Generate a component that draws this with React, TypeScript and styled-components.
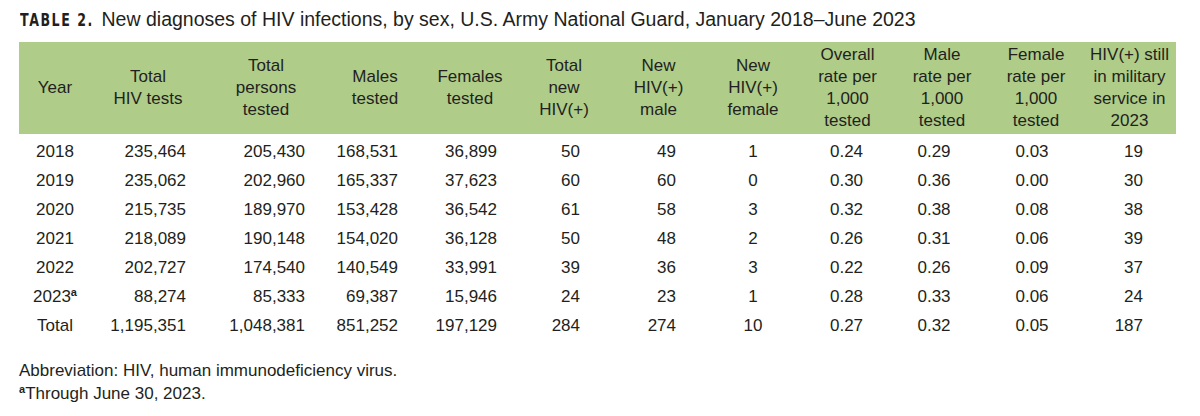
import styled, { createGlobalStyle } from 'styled-components';

const GlobalStyle = createGlobalStyle`
  body {
    margin: 0;
    background: #ffffff;
    font-family: "Liberation Sans", Arial, sans-serif;
    color: #231f20;
  }
`;

const Page = styled.div`
  padding: 7px 24px 0 19px;
  width: 1200px;
  box-sizing: border-box;
`;

const Title = styled.h1`
  margin: 0 0 10px 1px;
  font-size: 19.5px;
  font-weight: 400;
  line-height: 24px;
  white-space: nowrap;
`;

// condensed bold label, squeezed to the narrow face of the print original
const Label = styled.span`
  display: inline-block;
  font-family: "DejaVu Sans", sans-serif;
  font-weight: 700;
  font-size: 18px;
  letter-spacing: 2.2px;
  transform: scaleX(0.7);
  transform-origin: left center;
  margin-right: -24px;
`;

const Table = styled.table`
  width: 1157px;
  border-collapse: collapse;
  table-layout: fixed;
  font-size: 17px;
`;

const HeadRow = styled.tr`
  background: #afcc89;
  height: 92px;
`;

const Th = styled.th`
  font-weight: 400;
  line-height: 22px;
  text-align: center;
  vertical-align: middle;
  padding: 0;
`;

const Row = styled.tr<{ $first?: boolean }>`
  height: ${p => (p.$first ? '32px' : '29px')};

  td {
    padding-top: ${p => (p.$first ? '2px' : '0')};
  }
`;

const Td = styled.td<{ $align: 'center' | 'right'; $pr: number }>`
  text-align: ${p => p.$align};
  padding: 0 ${p => p.$pr}px 0 0;
  line-height: 29px;
  vertical-align: middle;
  white-space: nowrap;
`;

const Sup = styled.sup`
  font-size: 11px;
  font-weight: 700;
  line-height: 0;
  vertical-align: 6px;
`;

const Notes = styled.div`
  margin-top: 20px;
  font-size: 17px;
  line-height: 22.5px;
`;

type Col = { head: string[]; width: number; align: 'center' | 'right'; pr: number };

const COLS: Col[] = [
  { head: ['Year'], width: 72, align: 'center', pr: 0 },
  { head: ['Total', 'HIV tests'], width: 114, align: 'right', pr: 19 },
  { head: ['Total', 'persons', 'tested'], width: 122, align: 'right', pr: 22 },
  { head: ['Males', 'tested'], width: 96, align: 'right', pr: 25 },
  { head: ['Females', 'tested'], width: 94, align: 'right', pr: 20 },
  { head: ['Total', 'new', 'HIV(+)'], width: 94, align: 'right', pr: 31 },
  { head: ['New', 'HIV(+)', 'male'], width: 95, align: 'right', pr: 30 },
  { head: ['New', 'HIV(+)', 'female'], width: 94, align: 'center', pr: 0 },
  { head: ['Overall', 'rate per', '1,000', 'tested'], width: 95, align: 'center', pr: 2 },
  { head: ['Male', 'rate per', '1,000', 'tested'], width: 94, align: 'center', pr: 16 },
  { head: ['Female', 'rate per', '1,000', 'tested'], width: 94, align: 'center', pr: 8 },
  { head: ['HIV(+) still', 'in military', 'service in', '2023'], width: 93, align: 'right', pr: 33 },
];

const ROWS: string[][] = [
  ['2018', '235,464', '205,430', '168,531', '36,899', '50', '49', '1', '0.24', '0.29', '0.03', '19'],
  ['2019', '235,062', '202,960', '165,337', '37,623', '60', '60', '0', '0.30', '0.36', '0.00', '30'],
  ['2020', '215,735', '189,970', '153,428', '36,542', '61', '58', '3', '0.32', '0.38', '0.08', '38'],
  ['2021', '218,089', '190,148', '154,020', '36,128', '50', '48', '2', '0.26', '0.31', '0.06', '39'],
  ['2022', '202,727', '174,540', '140,549', '33,991', '39', '36', '3', '0.22', '0.26', '0.09', '37'],
  ['2023a', '88,274', '85,333', '69,387', '15,946', '24', '23', '1', '0.28', '0.33', '0.06', '24'],
  ['Total', '1,195,351', '1,048,381', '851,252', '197,129', '284', '274', '10', '0.27', '0.32', '0.05', '187'],
];

function renderCell(v: string) {
  if (v === '2023a') {
    return (
      <>
        2023<Sup>a</Sup>
      </>
    );
  }
  return v;
}

export default function App() {
  return (
    <>
      <GlobalStyle />
      <Page>
        <Title>
          <Label>TABLE 2.</Label>New diagnoses of HIV infections, by sex, U.S. Army National Guard, January 2018–June 2023
        </Title>
        <Table>
          <colgroup>
            {COLS.map((c, i) => (
              <col key={i} style={{ width: c.width }} />
            ))}
          </colgroup>
          <thead>
            <HeadRow>
              {COLS.map((c, i) => (
                <Th key={i}>
                  {c.head.map((line, j) => (
                    <div key={j}>{line}</div>
                  ))}
                </Th>
              ))}
            </HeadRow>
          </thead>
          <tbody>
            {ROWS.map((r, i) => (
              <Row key={i} $first={i === 0}>
                {r.map((v, j) => (
                  <Td key={j} $align={COLS[j].align} $pr={COLS[j].pr}>
                    {renderCell(v)}
                  </Td>
                ))}
              </Row>
            ))}
          </tbody>
        </Table>
        <Notes>
          <div>Abbreviation: HIV, human immunodeficiency virus.</div>
          <div>
            <Sup>a</Sup>Through June 30, 2023.
          </div>
        </Notes>
      </Page>
    </>
  );
}
